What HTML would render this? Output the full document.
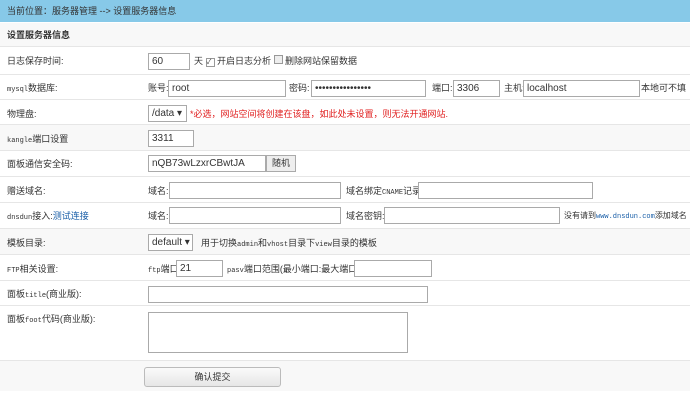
<!DOCTYPE html><html><head><meta charset="utf-8"><style>
body{margin:0;width:690px;height:403px;background:#fff;font-family:"Liberation Sans","Noto Sans CJK SC",sans-serif;font-size:9px;color:#333;position:relative;overflow:hidden}
.a{position:absolute;white-space:nowrap;line-height:12px}
.row{position:absolute;left:0;width:690px;border-bottom:1px solid #e6e6e6}
.g{background:#f8f8f8}
.in{position:absolute;border:1px solid #aaa;background:#fff;font-size:10px;line-height:15px;padding-left:3px;box-sizing:border-box;height:17px;white-space:nowrap;overflow:hidden}
.m{font-family:"Liberation Mono",monospace;font-size:7px}
</style></head><body>
<div class="row" style="top:0;height:22px;background:#87c9e8;border:none"></div>
<div class="a" style="left:7px;top:5px">当前位置：服务器管理 --&gt; 设置服务器信息</div>
<div class="row g" style="top:23px;height:23px"></div>
<div class="a" style="left:7px;top:29px;font-weight:bold">设置服务器信息</div>
<div class="row" style="top:46px;height:28px"></div>
<div class="row" style="top:75px;height:24px"></div>
<div class="row" style="top:100px;height:24px"></div>
<div class="row g" style="top:125px;height:25px"></div>
<div class="row" style="top:151px;height:25px"></div>
<div class="row" style="top:177px;height:25px"></div>
<div class="row" style="top:203px;height:25px"></div>
<div class="row g" style="top:229px;height:25px"></div>
<div class="row" style="top:255px;height:25px"></div>
<div class="row" style="top:281px;height:24px"></div>
<div class="row" style="top:306px;height:54px"></div>
<div class="row g" style="top:361px;height:30px;border:none"></div>

<div class="a" style="left:7px;top:55px">日志保存时间:</div>
<div class="in" style="left:148px;top:53px;width:42px">60</div>
<div class="a" style="left:194px;top:55px">天 <span style="display:inline-block;width:7px;height:7px;border:1px solid #999;font-size:7px;line-height:7px">✓</span> 开启日志分析 <span style="display:inline-block;width:7px;height:7px;border:1px solid #999;background:#eee"></span> 删除网站保留数据</div>

<div class="a" style="left:7px;top:82px"><span class="m">mysql</span>数据库:</div>
<div class="a" style="left:148px;top:82px">账号:</div>
<div class="in" style="left:168px;top:80px;width:118px">root</div>
<div class="a" style="left:289px;top:82px">密码:</div>
<div class="in" style="left:311px;top:80px;width:115px">••••••••••••••••</div>
<div class="a" style="left:432px;top:82px">端口:</div>
<div class="in" style="left:453px;top:80px;width:47px">3306</div>
<div class="a" style="left:504px;top:82px">主机:</div>
<div class="in" style="left:523px;top:80px;width:117px">localhost</div>
<div class="a" style="left:641px;top:82px">本地可不填</div>

<div class="a" style="left:7px;top:108px">物理盘:</div>
<div class="in" style="left:148px;top:105px;width:39px">/data ▾</div>
<div class="a" style="left:190px;top:108px;color:#e02020">*必选，网站空间将创建在该盘，如此处未设置，则无法开通网站.</div>

<div class="a" style="left:7px;top:133px"><span class="m">kangle</span>端口设置</div>
<div class="in" style="left:148px;top:130px;width:46px">3311</div>

<div class="a" style="left:7px;top:158px">面板通信安全码:</div>
<div class="in" style="left:148px;top:155px;width:118px">nQB73wLzxrCBwtJA</div>
<div class="a" style="left:266px;top:155px;width:28px;height:15px;border:1px solid #aaa;background:#eee;text-align:center;line-height:15px">随机</div>

<div class="a" style="left:7px;top:185px">赠送域名:</div>
<div class="a" style="left:148px;top:185px">域名:</div>
<div class="in" style="left:169px;top:182px;width:172px"></div>
<div class="a" style="left:346px;top:185px">域名绑定<span class="m">CNAME</span>记录</div>
<div class="in" style="left:418px;top:182px;width:175px"></div>

<div class="a" style="left:7px;top:210px"><span class="m">dnsdun</span>接入:<span style="color:#1a5fa8">测试连接</span></div>
<div class="a" style="left:148px;top:210px">域名:</div>
<div class="in" style="left:169px;top:207px;width:172px"></div>
<div class="a" style="left:346px;top:210px">域名密钥:</div>
<div class="in" style="left:384px;top:207px;width:176px"></div>
<div class="a" style="left:564px;top:210px;font-size:8px">没有请到<span class="m" style="color:#1a5fa8">www.dnsdun.com</span>添加域名</div>

<div class="a" style="left:7px;top:237px">模板目录:</div>
<div class="in" style="left:148px;top:234px;width:45px">default ▾</div>
<div class="a" style="left:201px;top:237px">用于切换<span class="m">admin</span>和<span class="m">vhost</span>目录下<span class="m">view</span>目录的模板</div>

<div class="a" style="left:7px;top:263px"><span class="m">FTP</span>相关设置:</div>
<div class="a" style="left:148px;top:263px"><span class="m">ftp</span>端口</div>
<div class="in" style="left:176px;top:260px;width:47px">21</div>
<div class="a" style="left:227px;top:263px"><span class="m">pasv</span>端口范围(最小端口:最大端口)</div>
<div class="in" style="left:354px;top:260px;width:78px"></div>

<div class="a" style="left:7px;top:288px">面板<span class="m">title</span>(商业版):</div>
<div class="in" style="left:148px;top:286px;width:280px"></div>

<div class="a" style="left:7px;top:313px">面板<span class="m">foot</span>代码(商业版):</div>
<div class="in" style="left:148px;top:312px;width:260px;height:41px"></div>

<div class="a" style="left:144px;top:367px;width:135px;height:18px;border:1px solid #bbb;border-radius:3px;background:linear-gradient(#fafafa,#e6e6e6);text-align:center;line-height:18px">确认提交</div>
</body></html>
